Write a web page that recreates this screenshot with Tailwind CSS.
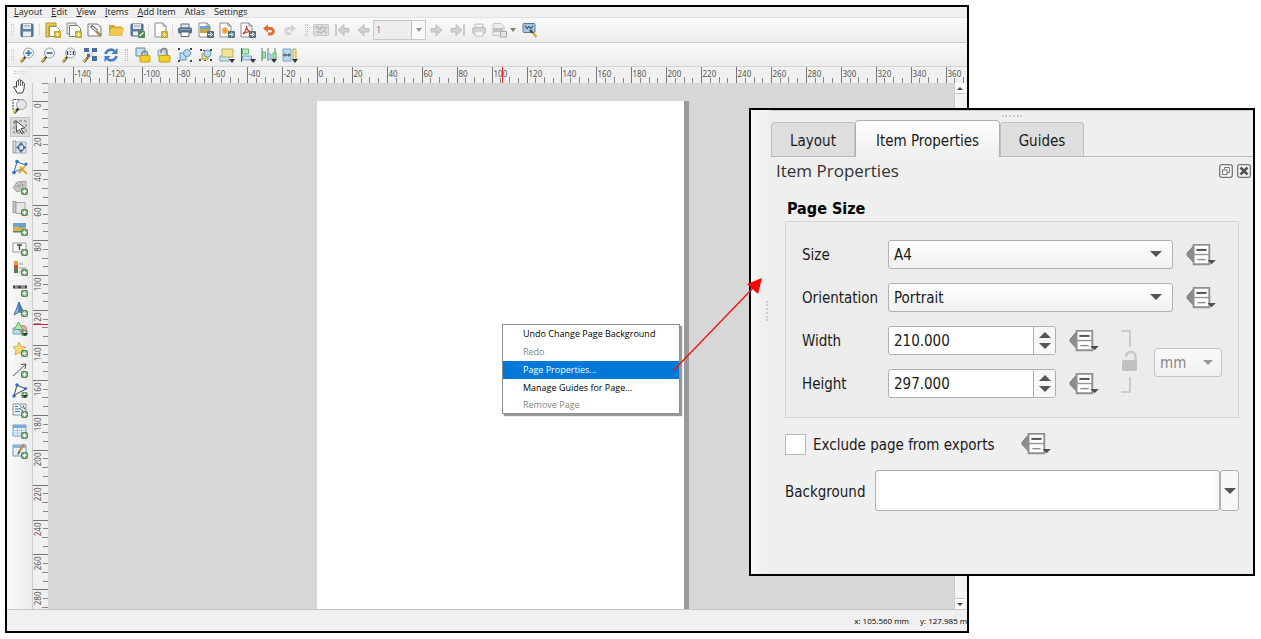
<!DOCTYPE html>
<html lang="en">
<head>
<meta charset="utf-8">
<title>Layout – Page Properties</title>
<script src="https://cdn.jsdelivr.net/npm/@tailwindcss/browser@4"></script>
</head>
<body class="relative h-screen min-h-[590px] overflow-hidden bg-white font-['Open_Sans','Noto_Sans',sans-serif] text-black">

<svg class="hidden" aria-hidden="true">
  <defs>
    <symbol id="plus" viewBox="0 0 7 7"><rect x=".5" y=".5" width="6" height="6" rx="1" fill="#6fa56d" stroke="#56895a"/><path d="M3.5 1.5v4M1.5 3.5h4" stroke="#fff" stroke-width="1.4"/></symbol>
    <symbol id="star" viewBox="0 0 7 7"><rect width="7" height="7" rx="1" fill="#c9a526"/><path d="M3.5 1v5M1 3.5h5M1.8 1.8l3.4 3.4M5.2 1.8L1.800 5.200" stroke="#fff3b0" stroke-width=".8"/></symbol>
    <symbol id="exp" viewBox="0 0 7 7"><rect width="7" height="7" rx="1" fill="#56707f"/><path d="M1 3.500h3M3 1.500l2.500 2L3 5.500" stroke="#fff" fill="none"/></symbol>
    <symbol id="sheet" viewBox="0 0 16 16"><path d="M2 1h8l3 3v11H2z" fill="#fdfdfd" stroke="#8d8d8d"/><path d="M10 1v3h3" fill="none" stroke="#8d8d8d"/></symbol>
    <symbol id="lens" viewBox="0 0 16 16"><path d="M2 15l5-6" stroke="#3d3d3d" stroke-width="2.2"/><path d="M1.500 14.500l3-3.500" stroke="#d9b83e" stroke-width="2"/><circle cx="9.500" cy="6" r="5" fill="#eef3f7" stroke="#9aa2a8"/></symbol>
    <symbol id="dd" viewBox="0 0 6 4"><path d="M0 0h6L3 4z" fill="#333"/></symbol>
    <symbol id="arrow" viewBox="0 0 16 16"><path d="M14 6.500v3.500H9v3.500L3 8l6-5.500v4z" fill="#ced0d1" stroke="#bcbebf"/></symbol>
    <symbol id="override" viewBox="0 0 32 26"><path d="M9 2v20L1 13.500V11z" fill="#8b8d8b" stroke="#6d6f6d"/><path d="M8 2h17v21H8z" fill="#fff" stroke="#8f918d" stroke-width="2"/><path d="M8 12.500h17" stroke="#92948f" stroke-width="1.500"/><path d="M11 7.500h11" stroke="#555" stroke-width="2.200"/><path d="M12 18h9" stroke="#8b8b8b" stroke-width="1.500"/><path d="M23 18.500h9L27.500 23z" fill="#4e4e4e"/></symbol>
  </defs>
</svg>

<main class="absolute inset-y-0 left-0 right-[292px] flex flex-col pt-[5px] pb-[6px] pl-[5px]">
<section class="flex min-h-0 flex-1 flex-col overflow-hidden border-2 border-black bg-[#f0f0f0]" aria-label="Layout window">

  <nav class="flex h-[11px] shrink-0 items-start gap-[9px] border-b border-[#e2e2e2] pl-[7px] text-[9px] leading-[9px] text-[#222]">
    <button><u>L</u>ayout</button><button><u>E</u>dit</button><button><u>V</u>iew</button><button><u>I</u>tems</button><button><u>A</u>dd Item</button><button>Atlas</button><button>Settings</button>
  </nav>

  <div class="flex h-[25px] shrink-0 items-center border-b border-[#c9c9c9] bg-linear-to-b from-[#fafafa] to-[#ededed] pl-1" role="toolbar" aria-label="Layout">
    <span class="mr-[2px] h-3 w-[3px] border-x border-dotted border-[#ccc]"></span>
    <button class="grid w-[21px] place-items-center" aria-label="Save"><svg class="size-4" viewBox="0 0 16 16"><rect x="2" y="2" width="12" height="12.500" rx="1" fill="#5d7d99" stroke="#48677f"/><rect x="4" y="2" width="8" height="5" fill="#dfe6ec"/><path d="M5 4h6" stroke="#8ba0b2"/><rect x="4" y="9.500" width="8" height="5" fill="#e9edf0"/></svg></button>
    <span class="mx-[2px] h-3 w-px bg-[#ddd]"></span>
    <button class="grid w-[21px] place-items-center" aria-label="New layout"><svg class="size-4" viewBox="0 0 16 16"><path d="M1 1h10v3H4v11H1z" fill="#e9c94c" stroke="#b9962b"/><path d="M4.500 4.500h7l3 3v7h-10z" fill="#fff" stroke="#8d8d8d"/><use href="#star" x="9" y="9" width="7" height="7"/></svg></button>
    <button class="grid w-[21px] place-items-center" aria-label="Duplicate layout"><svg class="size-4" viewBox="0 0 16 16"><path d="M1 1h9v11H1z" fill="#e9e9e9" stroke="#8d8d8d"/><path d="M3.500 3.500h8l3 3v8h-11z" fill="#fff" stroke="#777"/><use href="#star" x="9" y="9" width="7" height="7"/></svg></button>
    <button class="grid w-[21px] place-items-center" aria-label="Layout manager"><svg class="size-4" viewBox="0 0 16 16"><path d="M1 2h9l4 3v9H1z" fill="#fcfcfc" stroke="#777"/><path d="M4 4l6 5" stroke="#666" stroke-width="3"/><path d="M5 5l5 4" stroke="#f8f8f8" stroke-width="1.200"/><path d="M9 9l5 5" stroke="#9d8f64" stroke-width="2.500"/></svg></button>
    <button class="grid w-[21px] place-items-center" aria-label="Add items from template"><svg class="size-4" viewBox="0 0 16 16"><path d="M1 3h5l1 1.500h7V13H1z" fill="#d5a52a"/><path d="M3 6h12.500L14 13.500H1z" fill="#f3c94c" stroke="#dcae33" stroke-width=".6"/></svg></button>
    <button class="grid w-[21px] place-items-center" aria-label="Save as template"><svg class="size-4" viewBox="0 0 16 16"><rect x="2" y="2" width="12" height="12" rx="1" fill="#5d7d99" stroke="#48677f"/><rect x="4" y="2" width="8" height="5" fill="#dfe6ec"/><path d="M5 4h6" stroke="#8ba0b2"/><rect x="4" y="9.500" width="6" height="4" fill="#e9edf0"/><rect x="9" y="9" width="7" height="7" rx="1" fill="#4f8a54"/><path d="M10.500 14l4-3.500" stroke="#fff" stroke-width="1.400"/></svg></button>
    <span class="mx-px h-3 w-px bg-[#ddd]"></span>
    <button class="grid w-[21px] place-items-center" aria-label="Add pages"><svg class="size-4" viewBox="0 0 16 16"><use href="#sheet"/><use href="#star" x="8" y="9" width="7" height="7"/></svg></button>
    <span class="mx-px h-3 w-px bg-[#ddd]"></span>
    <button class="grid w-[21px] place-items-center" aria-label="Print"><svg class="size-4" viewBox="0 0 16 16"><path d="M4 2h8v4H4z" fill="#e4e7ea" stroke="#62717e"/><rect x="1" y="5.500" width="14" height="6" rx="1.500" fill="#557390"/><path d="M4 10h8v4.500H4z" fill="#fff" stroke="#667"/><path d="M3 7.500h10" stroke="#8ea7be"/></svg></button>
    <button class="grid w-[21px] place-items-center" aria-label="Export as image"><svg class="size-4" viewBox="0 0 16 16"><use href="#sheet" x="-1"/><path d="M2 4h10v6H2z" fill="#69a3d2"/><path d="M2 8q5-3 10 0v3H2z" fill="#c9a83b"/><use href="#exp" x="9" y="9" width="7" height="7"/></svg></button>
    <button class="grid w-[21px] place-items-center" aria-label="Export as SVG"><svg class="size-4" viewBox="0 0 16 16"><use href="#sheet" x="-1"/><path d="M6 5v7M2.500 8.500h7M3.500 6l5 5M8.500 6l-5 5" stroke="#f09a2e" stroke-width="1.400"/><use href="#exp" x="9" y="9" width="7" height="7"/></svg></button>
    <button class="grid w-[21px] place-items-center" aria-label="Export as PDF"><svg class="size-4" viewBox="0 0 16 16"><use href="#sheet" x="-1"/><path d="M3 12q4-4 3.500-8 0 5 5 6-4-1-8.500 2z" fill="none" stroke="#d8332b" stroke-width="1.200"/><use href="#exp" x="9" y="9" width="7" height="7"/></svg></button>
    <button class="grid w-[21px] place-items-center" aria-label="Undo"><svg class="size-4" viewBox="0 0 16 16"><path d="M6 6.500h3.500a2.800 2.800 0 010 5.600H7" fill="none" stroke="#dd6f37" stroke-width="3"/><path d="M7 2.500v8L2 6.500z" fill="#dd6f37"/></svg></button>
    <button class="grid w-[21px] place-items-center" aria-label="Redo"><svg class="size-4" viewBox="0 0 16 16"><path d="M10 6.500H6.500a2.600 2.600 0 000 5.200H9" fill="none" stroke="#d3d5d3" stroke-width="3"/><path d="M9 2.500v8l5-4z" fill="#d3d5d3"/></svg></button>
    <span class="mr-[2px] ml-[5px] h-3 w-[3px] border-x border-dotted border-[#bbb]"></span>
    <button class="grid w-[21px] place-items-center" aria-label="Preview atlas"><svg class="size-4" viewBox="0 0 16 16"><rect x=".5" y="2.500" width="15" height="11" rx="1" fill="#dcdedf" stroke="#c4c6c8"/><path d="M2 5h3v2h3V5h2l2 2 2-2M3 10h3l2 1 3-2 3 2" fill="none" stroke="#b4b7b9" stroke-width="1.300"/></svg></button>
    <button class="grid w-[21px] place-items-center" aria-label="First feature"><svg class="size-4" viewBox="0 0 16 16"><path d="M2 2v12" stroke="#bcbebf" stroke-width="1.500"/><use href="#arrow" x="1"/></svg></button>
    <button class="grid w-[21px] place-items-center" aria-label="Previous feature"><svg class="size-4" viewBox="0 0 16 16"><use href="#arrow"/></svg></button>
    <div class="flex h-5 w-[53px] border border-[#c9c9c9]"><input class="w-[38px] border-r border-[#bbb] bg-[#ededed] pl-[2px] text-[9px] text-[#777]" value="1" aria-label="Atlas feature"><button class="grid flex-1 place-items-center bg-[#fafafa]" aria-label="Choose feature"><svg class="h-1 w-[6px] opacity-50"><use href="#dd"/></svg></button></div>
    <button class="grid w-[21px] place-items-center" aria-label="Next feature"><svg class="size-4" viewBox="0 0 16 16"><g transform="matrix(-1 0 0 1 16 0)"><use href="#arrow"/></g></svg></button>
    <button class="grid w-[21px] place-items-center" aria-label="Last feature"><svg class="size-4" viewBox="0 0 16 16"><g transform="matrix(-1 0 0 1 15 0)"><use href="#arrow"/></g><path d="M14 2v12" stroke="#bcbebf" stroke-width="1.500"/></svg></button>
    <button class="grid w-[21px] place-items-center" aria-label="Print atlas"><svg class="size-4" viewBox="0 0 16 16"><path d="M4 2h8v4H4zM4 10h8v4H4z" fill="#f0f0f0" stroke="#b9bbbd"/><rect x="1.500" y="5.500" width="13" height="6" rx="1.500" fill="#d0d2d3" stroke="#bdbfc0"/><path d="M4.500 10h7v3.500h-7z" fill="#f5f5f5"/></svg></button>
    <button class="grid w-[21px] place-items-center" aria-label="Export atlas"><svg class="size-4" viewBox="0 0 16 16"><path d="M1 1.500h8l3 3v9H1z" fill="#ececec" stroke="#c4c6c7"/><path d="M1 6h10v4H1z" fill="#bfc2c3"/><rect x="8.500" y="9.500" width="6" height="5.500" fill="#e5e5e5" stroke="#aaa"/></svg></button>
    <svg class="h-1 w-[6px] opacity-60"><use href="#dd"/></svg>
    <button class="ml-[3px] grid w-[21px] place-items-center" aria-label="Atlas settings"><svg class="size-4" viewBox="0 0 16 16"><rect x="1" y="1.500" width="12" height="9" rx="1" fill="#a9c8e4" stroke="#55779a"/><path d="M3 3.500l2 3 2-2 2 2 2-3" stroke="#3c5b7d" fill="none" stroke-width="1.200"/><path d="M8 8l3 3" stroke="#444" stroke-width="2.200"/><path d="M11 11l3.500 4" stroke="#d4a73a" stroke-width="2.400"/></svg></button>
  </div>

  <div class="flex h-6 shrink-0 items-center border-b border-[#d2d2d2] bg-linear-to-b from-[#f9f9f9] to-[#ededed] pl-1" role="toolbar" aria-label="Navigation and actions">
    <span class="mr-[2px] h-3 w-[3px] border-x border-dotted border-[#ccc]"></span>
    <button class="grid w-[21px] place-items-center" aria-label="Zoom in"><svg class="size-4" viewBox="0 0 16 16"><use href="#lens"/><path d="M9.500 3v6M6.500 6h6" stroke="#5b82ad" stroke-width="2"/></svg></button>
    <button class="grid w-[21px] place-items-center" aria-label="Zoom out"><svg class="size-4" viewBox="0 0 16 16"><use href="#lens"/><path d="M6.500 6h6" stroke="#5b82ad" stroke-width="2"/></svg></button>
    <button class="grid w-[21px] place-items-center" aria-label="Zoom to 100%"><svg class="size-4" viewBox="0 0 16 16"><use href="#lens"/><path d="M6.500 4v4M12.500 4v4M9.500 4.500v1M9.500 7v1" stroke="#444" stroke-width="1.400"/></svg></button>
    <button class="grid w-[21px] place-items-center" aria-label="Zoom full"><svg class="size-4" viewBox="0 0 16 16"><path d="M2 15l5-6" stroke="#3d3d3d" stroke-width="2.200"/><path d="M1.500 14.500l3-3.500" stroke="#d9b83e" stroke-width="2"/><path d="M5 4.500h7v6H5z" fill="#d9dde0"/><path d="M2 1h5v4H2zM10 1h5v4h-5zM10 9h5v5h-5zM5 7h3v3H5z" fill="#466f9f"/></svg></button>
    <button class="grid w-[21px] place-items-center" aria-label="Refresh"><svg class="size-4" viewBox="0 0 16 16"><path d="M2.500 7a5.500 5.500 0 019-3M13.500 9a5.500 5.500 0 01-9 3" fill="none" stroke="#4380bd" stroke-width="2.600"/><path d="M14.500 1v6h-6zM1.500 15V9h6z" fill="#4380bd"/></svg></button>
    <span class="mr-1 ml-1 h-3 w-[3px] border-x border-dotted border-[#bbb]"></span>
    <button class="grid w-[21px] place-items-center" aria-label="Lock items"><svg class="size-4" viewBox="0 0 16 16"><path d="M1 1h9v8H1z" fill="#c5e1f3" stroke="#648aa8"/><path d="M7 9V7a2.700 2.700 0 015.500 0v2" fill="none" stroke="#808080" stroke-width="1.500"/><rect x="5" y="8.500" width="10" height="6.500" rx="1" fill="#f4cf28" stroke="#c29d15"/></svg></button>
    <button class="grid w-[21px] place-items-center" aria-label="Unlock items"><svg class="size-4" viewBox="0 0 16 16"><path d="M2 3h8v6H2z" fill="#c5e1f3" stroke="#88a7bd"/><path d="M5 6V4.500a3 3 0 016 0V9" fill="none" stroke="#808080" stroke-width="1.500"/><rect x="3" y="8.500" width="11" height="6.500" rx="1" fill="#f4cf28" stroke="#c29d15"/></svg></button>
    <button class="grid w-[21px] place-items-center" aria-label="Group"><svg class="size-4" viewBox="0 0 16 16"><rect x="3" y="6" width="6" height="7" fill="#b8dcf4" stroke="#6594b6"/><circle cx="10" cy="6" r="3.500" fill="#b8dcf4" stroke="#6594b6"/><path d="M1 1h2v2H1zM13 1h2v2h-2zM1 13h2v2H1zM13 13h2v2h-2z" fill="#444"/></svg></button>
    <button class="grid w-[21px] place-items-center" aria-label="Ungroup"><svg class="size-4" viewBox="0 0 16 16"><rect x="4" y="7" width="6" height="5" fill="#eadf79" stroke="#9e9745"/><circle cx="9.500" cy="6.500" r="3.500" fill="#b8dcf4" stroke="#6594b6"/><path d="M2 2h2v2H2zM12 2h2v2h-2zM1 12h2v2H1zM12 12h2v2h-2zM5 3h2v1H5zM6 13h2v1H6z" fill="#444"/></svg></button>
    <button class="grid w-[21px] place-items-center" aria-label="Raise"><svg class="size-4" viewBox="0 0 16 16"><path d="M1 9h9v5H1z" fill="#c9e4f5" stroke="#7aa4be"/><path d="M3 2h11v8H3z" fill="#efe69b" stroke="#b9b062"/><use href="#dd" x="10" y="12" width="6" height="4"/></svg></button>
    <button class="grid w-[21px] place-items-center" aria-label="Align"><svg class="size-4" viewBox="0 0 16 16"><path d="M1.500 1v14" stroke="#555"/><path d="M2.500 2h6v5h-6z" fill="#b6edc0" stroke="#69b277"/><path d="M2.500 9h9v4h-9z" fill="#c5e1f3" stroke="#7aa4be"/><use href="#dd" x="10" y="12" width="6" height="4"/></svg></button>
    <button class="grid w-[21px] place-items-center" aria-label="Distribute"><svg class="size-4" viewBox="0 0 16 16"><path d="M1 1v13M7 1v13M14 1v13" stroke="#5c7b69"/><path d="M1.500 5h3v6h-3zM12 6h3v6h-3z" fill="#a6e7b2" stroke="#63b176"/><path d="M7 7h3v5H7z" fill="#c5e1f3" stroke="#7aa4be"/><use href="#dd" x="10" y="12" width="6" height="4"/></svg></button>
    <button class="grid w-[21px] place-items-center" aria-label="Resize"><svg class="size-4" viewBox="0 0 16 16"><path d="M1 2h8v12H1z" fill="#b9dcf2" stroke="#7aa4be"/><path d="M1 8h3M9 8H6M3 6.500L4.500 8 3 9.500M7 6.500L5.500 8 7 9.500" stroke="#333" fill="none"/><path d="M11 2h3v11h-3z" fill="#efe69b" stroke="#b3a95a"/><use href="#dd" x="10" y="12" width="6" height="4"/></svg></button>
  </div>

  <div class="flex min-h-0 flex-1 border-b border-[#c4c4c4]">
    <div class="flex w-[25px] shrink-0 flex-col items-center bg-linear-to-r from-[#fbfbfb] to-[#ececec] pt-1" role="toolbar" aria-label="Toolbox">
      <span class="h-[3px] w-3 border-y border-dotted border-[#ccc]"></span>
      <div class="mt-[2px] flex h-[385px] flex-col justify-between">
        <button class="grid size-5 place-items-center" aria-label="Pan"><svg class="size-4" viewBox="0 0 16 16"><path d="M5 15q-1-3-3.500-6 1-1.500 3 .5V3.500q1-1.300 2 0V2q1-1.300 2 0v1q1-1.200 2 .2V5q1.500-1 2 .5 0 6-2 9.500z" fill="#fff" stroke="#444"/><path d="M6.500 3.500V8M8.500 3v5M10.500 4v4" stroke="#444" stroke-width=".8"/></svg></button>
        <button class="grid size-5 place-items-center" aria-label="Zoom"><svg class="size-4" viewBox="0 0 16 16"><path d="M1 12V1.500h11" fill="none" stroke="#444" stroke-dasharray="2 1"/><path d="M2 15l5-5" stroke="#333" stroke-width="2.500"/><path d="M1.500 15l2.500-3" stroke="#d9b83e" stroke-width="2"/><circle cx="9.500" cy="6.500" r="5" fill="#e3e5e3" stroke="#9fa19f"/></svg></button>
        <button class="grid size-5 place-items-center border border-[#c4c4c4] bg-[#dadada]" aria-label="Select" aria-pressed="true"><svg class="size-4" viewBox="0 0 16 16"><path d="M2 2h12v12H2z" fill="none" stroke="#777" stroke-dasharray="3 2"/><path d="M4 2l9 7-4 .5 2.500 4-2 1-2-4L4.500 13z" fill="#fff" stroke="#444"/></svg></button>
        <button class="grid size-5 place-items-center" aria-label="Move content"><svg class="size-4" viewBox="0 0 16 16"><path d="M1 2h3v12H1z" fill="#ddd" stroke="#999"/><path d="M4 3h10v11H4z" fill="#dfe6ec" stroke="#a3afba"/><path d="M9 3l3 3.500H6zM9 14l3-3.500H6zM4 8.500L7.500 6v5zM14.500 8.500L11 6v5z" fill="#456f9f"/></svg></button>
        <button class="grid size-5 place-items-center" aria-label="Edit nodes"><svg class="size-4" viewBox="0 0 16 16"><path d="M2 13L5 3l9 3-4 4z" fill="#f1f1f1" stroke="#3c6da5"/><circle cx="5" cy="2.500" r="1.800" fill="#2f73cf"/><circle cx="2" cy="13.500" r="1.800" fill="#2f73cf"/><circle cx="14" cy="5" r="1.600" fill="#2f73cf"/><path d="M7 14l6-7M8 8l7 7" stroke="#e0aa2e" stroke-width="2"/></svg></button>
        <button class="grid size-5 place-items-center" aria-label="Add map"><svg class="size-4" viewBox="0 0 16 16"><path d="M1 9l4-6 9-1v8l-9 3z" fill="#c8cac8" stroke="#a2a4a2"/><path d="M3 8l10-3M5 4l3 6M9 3l2 6" stroke="#999b99" stroke-width=".8"/><use href="#plus" x="9" y="9" width="7" height="7"/></svg></button>
        <button class="grid size-5 place-items-center" aria-label="Add 3D map"><svg class="size-4" viewBox="0 0 16 16"><path d="M1 1.500h3v11H1z" fill="#c7c7c7" stroke="#999"/><path d="M4 2.500h9v11H4z" fill="#e7e7e7" stroke="#a5a5a5"/><use href="#plus" x="9" y="9" width="7" height="7"/></svg></button>
        <button class="grid size-5 place-items-center" aria-label="Add picture"><svg class="size-4" viewBox="0 0 16 16"><path d="M1 3h13v9H1z" fill="#66a2d6"/><path d="M1 8q4-4 7 0l6-1v5H1z" fill="#d4b64c"/><path d="M1 11h13v1.500H1z" fill="#61896c"/><use href="#plus" x="9" y="9" width="7" height="7"/></svg></button>
        <button class="grid size-5 place-items-center" aria-label="Add label"><svg class="size-4" viewBox="0 0 16 16"><path d="M1 3h13v9H1z" fill="#fafafa" stroke="#999"/><path d="M5 5h5M7.500 5v5" stroke="#444" stroke-width="1.300"/><use href="#plus" x="9" y="9" width="7" height="7"/></svg></button>
        <button class="grid size-5 place-items-center" aria-label="Add legend"><svg class="size-4" viewBox="0 0 16 16"><path d="M2 1h4v4H2z" fill="#e8a02e"/><path d="M2 5h4v4H2z" fill="#cc4b39"/><path d="M2 9h4v4H2z" fill="#3d8d49"/><path d="M7 4h4M7 8h7M7 12h3" stroke="#999"/><use href="#plus" x="9" y="9" width="7" height="7"/></svg></button>
        <button class="grid size-5 place-items-center" aria-label="Add scale bar"><svg class="size-4" viewBox="0 0 16 16"><path d="M1 4.500h14v3H1z" fill="#444"/><path d="M3 6h3M9 6h4" stroke="#ddd"/><use href="#plus" x="9" y="9" width="7" height="7"/></svg></button>
        <button class="grid size-5 place-items-center" aria-label="Add north arrow"><svg class="size-4" viewBox="0 0 16 16"><path d="M7 1L2 14l5-3z" fill="#8bb3d8" stroke="#4c7ba8"/><path d="M7 1l5 11-5-1z" fill="#4b7cae" stroke="#4c7ba8"/><use href="#plus" x="9" y="9" width="7" height="7"/></svg></button>
        <button class="grid size-5 place-items-center" aria-label="Add shape"><svg class="size-4" viewBox="0 0 16 16"><path d="M1 7h9v6H1z" fill="#b9dcf2" stroke="#7aa4be"/><circle cx="11" cy="8" r="3.500" fill="#eeaaa5" stroke="#c67a74"/><path d="M6.500 1L11 8.500H2z" fill="#a6e7a6" stroke="#65a865"/><use href="#plus" x="9" y="9" width="7" height="6"/><path d="M10 12h6l-3 3z" fill="#333"/></svg></button>
        <button class="grid size-5 place-items-center" aria-label="Add marker"><svg class="size-4" viewBox="0 0 16 16"><path d="M7 1l2 4.500 5 .500-4 3.300 1 4.700-4-2.500L3 14l1-4.700L1 6l4.500-.500z" fill="#f8da83" stroke="#d8ad51"/><use href="#plus" x="9" y="9" width="7" height="7"/></svg></button>
        <button class="grid size-5 place-items-center" aria-label="Add arrow"><svg class="size-4" viewBox="0 0 16 16"><path d="M1 14L13 3M9 2.500l5-.500-1 5" fill="none" stroke="#555"/><use href="#plus" x="9" y="9" width="7" height="7"/></svg></button>
        <button class="grid size-5 place-items-center" aria-label="Add node item"><svg class="size-4" viewBox="0 0 16 16"><path d="M2 14L5 3l9 4-8 4z" fill="#f5f5f5" stroke="#444"/><circle cx="5" cy="3" r="1.800" fill="#2f73cf"/><circle cx="2" cy="14" r="1.800" fill="#2f73cf"/><circle cx="13.500" cy="6.500" r="1.600" fill="#2f73cf"/><use href="#plus" x="9" y="10" width="7" height="6"/><path d="M10 13h6l-3 3z" fill="#333"/></svg></button>
        <button class="grid size-5 place-items-center" aria-label="Add HTML"><svg class="size-4" viewBox="0 0 16 16"><path d="M1 2h13v11H1z" fill="#eef3f7" stroke="#8293a3"/><path d="M3 4.500h3M3 7h4M3 9.500h5" stroke="#4d86bf"/><path d="M8 3.500l3 3M11 3.500l2 4M7 6l4 3" stroke="#555"/><use href="#plus" x="9" y="9" width="7" height="7"/></svg></button>
        <button class="grid size-5 place-items-center" aria-label="Add attribute table"><svg class="size-4" viewBox="0 0 16 16"><path d="M1 2h13v11H1z" fill="#edf5fb" stroke="#6f9cc4"/><path d="M1 2h13v3H1z" fill="#79a9d6"/><path d="M1 7.500h13M1 10h13M5.500 5v8M9.500 5v8" stroke="#a9c6df"/><use href="#plus" x="9" y="9" width="7" height="7"/></svg></button>
        <button class="grid size-5 place-items-center" aria-label="Add fixed table"><svg class="size-4" viewBox="0 0 16 16"><path d="M1 2h13v11H1z" fill="#e5eff7" stroke="#6f9cc4"/><path d="M1 2h13v3H1z" fill="#8cb4da"/><path d="M12 1L7 9" stroke="#c9883a" stroke-width="2.200"/><path d="M7 8l-2 4 3-2z" fill="#333"/><use href="#plus" x="9" y="9" width="7" height="7"/></svg></button>
      </div>
    </div>

    <div class="flex min-w-0 flex-1 flex-col">
      <div class="h-4 shrink-0 overflow-hidden"><svg id="hruler" class="h-4 w-full font-['Noto_Sans',sans-serif]" role="img" aria-label="Horizontal ruler"></svg></div>
      <div class="flex min-h-0 flex-1">
        <div class="w-4 shrink-0 overflow-hidden"><svg id="vruler" class="h-full w-4 font-['Noto_Sans',sans-serif]" role="img" aria-label="Vertical ruler"></svg></div>
        <div class="min-w-0 flex-1 bg-[#d7d7d7] pt-[18px] pl-[269px]">
          <div class="h-full w-[372px] border-r-[5px] border-[#999] bg-white"></div>
        </div>
        <div class="mr-[2px] flex w-[11px] shrink-0 flex-col justify-between border-l border-[#ccc] bg-[#f3f3f3]">
          <button class="grid h-[11px] place-items-center border-b border-[#ccc] bg-white" aria-label="Scroll up"><svg class="h-[3px] w-[6px]" viewBox="0 0 6 3"><path d="M0 3h6L3 0z" fill="#444"/></svg></button>
          <button class="grid h-[11px] place-items-center border-t border-[#ccc] bg-white" aria-label="Scroll down"><svg class="h-[3px] w-[6px]" viewBox="0 0 6 3"><path d="M0 0h6L3 3z" fill="#444"/></svg></button>
        </div>
      </div>
    </div>
  </div>

  <footer class="flex h-[21px] shrink-0 items-center justify-end gap-[11px] overflow-hidden text-[8px] whitespace-nowrap">
    <span>x: 105.560 mm</span><span class="w-[47px] overflow-hidden">y: 127.985 mm</span>
  </footer>
</section>
</main>

<ul class="absolute top-[324px] left-[502px] w-[178px] border border-[#8f8f8f] bg-white text-[9px] leading-[18px] shadow-[2px_2px_1px_#999]" role="menu">
  <li><button class="block w-full pl-5 text-left" role="menuitem">Undo Change Page Background</button></li>
  <li><button class="block w-full pl-5 text-left text-[#858585]" role="menuitem">Redo</button></li>
  <li><button class="block w-full bg-[#0078d7] pl-5 text-left text-white" role="menuitem">Page Properties...</button></li>
  <li><button class="block w-full pl-5 text-left" role="menuitem">Manage Guides for Page...</button></li>
  <li><button class="block w-full pl-5 text-left leading-4 text-[#858585]" role="menuitem">Remove Page</button></li>
</ul>

<aside class="absolute top-[108px] left-[749px] flex h-[468px] w-[506px] border-2 border-black bg-[#efefef] font-['DejaVu_Sans_Condensed','DejaVu_Sans',sans-serif] text-[15px] text-[#1a1a1a]" aria-label="Item Properties">
  <div class="flex w-5 shrink-0 items-center bg-linear-to-r from-[#fafafa] to-[#efefef] to-60% pb-[62px] pl-[15px]"><span class="h-5 w-[3px] border-l-2 border-dotted border-[#ccc]"></span></div>
  <div class="flex min-w-0 flex-1 flex-col">
    <div class="flex h-[11px] justify-center border-t border-[#ccc] pt-1"><span class="h-1 w-5 border-t-2 border-dotted border-[#ccc]"></span></div>
    <div class="flex h-9 items-end border-b border-[#b9b9b9]" role="tablist">
      <button class="h-[34px] w-[84px] rounded-t-sm border border-b-0 border-[#c0c0c0] bg-[#dedede] pt-1" role="tab">Layout</button>
      <button class="-mb-px h-[37px] w-[145px] rounded-t-sm border border-b-0 border-[#b0b0b0] bg-linear-to-b from-white to-[#efefef] pt-1" role="tab" aria-selected="true">Item Properties</button>
      <button class="h-[34px] w-[84px] rounded-t-sm border border-b-0 border-[#c0c0c0] bg-[#dedede] pt-1" role="tab">Guides</button>
    </div>
    <header class="flex h-7 items-center justify-between pr-[2px] pl-[5px]">
      <h1 class="font-['Open_Sans','Noto_Sans',sans-serif] text-[17px] text-[#333]">Item Properties</h1>
      <span class="flex gap-1">
        <button aria-label="Float panel"><svg class="block size-[14px]" viewBox="0 0 14 14"><rect x=".7" y=".7" width="12.600" height="12.600" rx="2" fill="#f5f5f5" stroke="#777" stroke-width="1.300"/><path d="M5.500 5.500V3.500h5v5h-2" fill="none" stroke="#777"/><rect x="3.500" y="6" width="4.500" height="4.500" fill="#fff" stroke="#777"/></svg></button>
        <button aria-label="Close panel"><svg class="block size-[14px]" viewBox="0 0 14 14"><rect x=".7" y=".7" width="12.600" height="12.600" rx="2" fill="#f5f5f5" stroke="#777" stroke-width="1.300"/><path d="M3.500 3.500l7 7M10.500 3.500l-7 7" stroke="#555" stroke-width="2.600"/></svg></button>
      </span>
    </header>

    <form class="flex flex-col pt-3 pr-[14px] pl-[14px]">
      <h2 class="pl-[2px] text-[16px] leading-6 font-bold text-black">Page Size</h2>
      <fieldset class="flex h-[197px] flex-col gap-[14px] border border-[#d4d4d4] bg-[#ececec] pt-[18px] pr-4 pl-4">
        <div class="flex items-center">
          <label for="size" class="w-[86px] pt-[2px]">Size</label>
          <div class="relative flex-1"><select id="size" class="block h-[29px] w-full appearance-none rounded-[3px] border border-[#b0b0b0] bg-linear-to-b from-white to-[#f0f0f0] pt-[2px] pl-[5px]"><option>A4</option></select><svg class="pointer-events-none absolute top-[11px] right-[11px] h-[6px] w-3" viewBox="0 0 12 6"><path d="M0 0h12L6 6z" fill="#555"/></svg></div>
          <button type="button" class="mr-[6px] ml-[13px]" aria-label="Size override"><svg class="block h-6 w-[30px]"><use href="#override"/></svg></button>
        </div>
        <div class="flex items-center">
          <label for="orient" class="w-[86px] pt-[2px]">Orientation</label>
          <div class="relative flex-1"><select id="orient" class="block h-[29px] w-full appearance-none rounded-[3px] border border-[#b0b0b0] bg-linear-to-b from-white to-[#f0f0f0] pt-[2px] pl-[5px]"><option>Portrait</option></select><svg class="pointer-events-none absolute top-[11px] right-[11px] h-[6px] w-3" viewBox="0 0 12 6"><path d="M0 0h12L6 6z" fill="#555"/></svg></div>
          <button type="button" class="mr-[6px] ml-[13px]" aria-label="Orientation override"><svg class="block h-6 w-[30px]"><use href="#override"/></svg></button>
        </div>
        <div class="flex items-center">
          <div class="flex flex-col gap-[14px]">
            <div class="flex items-center">
              <label for="w" class="w-[86px] pt-[2px]">Width</label>
              <div class="flex h-[29px] w-[168px] overflow-hidden rounded-[3px] border border-[#b0b0b0] bg-white"><input id="w" class="min-w-0 flex-1 pt-[2px] pl-[5px]" value="210.000"><div class="flex w-[22px] flex-col items-center justify-center gap-[5px] border-l border-[#b0b0b0] bg-[#f7f7f7]"><button type="button" aria-label="Increase width"><svg class="block h-[6px] w-3" viewBox="0 0 12 6"><path d="M0 6h12L6 0z" fill="#555"/></svg></button><button type="button" aria-label="Decrease width"><svg class="block h-[6px] w-3" viewBox="0 0 12 6"><path d="M0 0h12L6 6z" fill="#555"/></svg></button></div></div>
              <button type="button" class="ml-[13px]" aria-label="Width override"><svg class="block h-6 w-[30px]"><use href="#override"/></svg></button>
            </div>
            <div class="flex items-center">
              <label for="h" class="w-[86px] pt-[2px]">Height</label>
              <div class="flex h-[29px] w-[168px] overflow-hidden rounded-[3px] border border-[#b0b0b0] bg-white"><input id="h" class="min-w-0 flex-1 pt-[2px] pl-[5px]" value="297.000"><div class="flex w-[22px] flex-col items-center justify-center gap-[5px] border-l border-[#b0b0b0] bg-[#f7f7f7]"><button type="button" aria-label="Increase height"><svg class="block h-[6px] w-3" viewBox="0 0 12 6"><path d="M0 6h12L6 0z" fill="#555"/></svg></button><button type="button" aria-label="Decrease height"><svg class="block h-[6px] w-3" viewBox="0 0 12 6"><path d="M0 0h12L6 6z" fill="#555"/></svg></button></div></div>
              <button type="button" class="ml-[13px]" aria-label="Height override"><svg class="block h-6 w-[30px]"><use href="#override"/></svg></button>
            </div>
          </div>
          <button type="button" class="ml-[22px]" aria-label="Lock aspect ratio"><svg class="block h-[66px] w-[18px]" viewBox="0 0 18 66"><path d="M0 2h9v16M0 63h9V48" fill="none" stroke="#cacaca" stroke-width="2"/><path d="M5 28q0-5 5-5 4.500 0 4.500 5v4" fill="none" stroke="#cacaca" stroke-width="2.500"/><rect x="1" y="31" width="15" height="11" rx="2" fill="#c0c0c0"/></svg></button>
          <div class="relative ml-[15px] w-[68px]"><select class="block h-[29px] w-full appearance-none rounded-[3px] border border-[#c4c4c4] bg-linear-to-b from-[#fafafa] to-[#f0f0f0] pt-[2px] pl-[5px] text-[#888]" aria-label="Units"><option>mm</option></select><svg class="pointer-events-none absolute top-3 right-[9px] h-[5px] w-[10px]" viewBox="0 0 10 5"><path d="M0 0h10L5 5z" fill="#999"/></svg></div>
        </div>
      </fieldset>
      <div class="mt-[13px] flex h-[26px] items-center">
        <input id="ex" type="checkbox" class="size-[21px] appearance-none border border-[#b8b8b8] bg-white">
        <label for="ex" class="ml-[7px] w-[208px] pt-[2px]">Exclude page from exports</label>
        <button type="button" aria-label="Exclude override"><svg class="block h-6 w-[30px]"><use href="#override"/></svg></button>
      </div>
      <div class="mt-[13px] flex h-[41px] items-center">
        <label for="bg" class="w-[90px] pt-[3px]">Background</label>
        <button id="bg" type="button" class="h-full flex-1 rounded-[3px] border border-[#b0b0b0] bg-[#f8f8f8] px-1 pt-px pb-[3px]"><span class="block h-full bg-white"></span></button>
        <button type="button" class="grid h-full w-[19px] place-items-center rounded-[3px] border border-[#b0b0b0] bg-[#f7f7f7]" aria-label="Background options"><svg class="h-[6px] w-3" viewBox="0 0 12 6"><path d="M0 0h12L6 6z" fill="#555"/></svg></button>
      </div>
    </form>
  </div>
</aside>

<svg class="pointer-events-none absolute top-[270px] left-[660px] h-[110px] w-[110px]" viewBox="0 0 110 110" aria-hidden="true"><path d="M13 101L94 17" stroke="#f01414" stroke-width="1.400"/><path d="M102 8l-15 6 11 10z" fill="#f00"/></svg>

<script>
// Ruler ticks: a labelled line every 20 mm, a short one every 5 mm.
const NS = 'http://www.w3.org/2000/svg', MM = 1.746;
function add(svg, tag, attrs, text) {
  const e = document.createElementNS(NS, tag);
  for (const k in attrs) e.setAttribute(k, attrs[k]);
  if (text !== undefined) e.textContent = text;
  svg.appendChild(e);
}
function ruler(id, vertical, origin, from, to, cursor) {
  const svg = document.getElementById(id);
  for (let mm = from; mm <= to; mm += 5) {
    const p = Math.round(origin + mm * MM) + 0.5;
    const len = mm % 20 === 0 ? 16 : mm % 10 === 0 ? 6 : 5;
    const stroke = mm % 20 === 0 ? '#777' : '#888';
    add(svg, 'line', vertical ? {x1: 16 - len, x2: 16, y1: p, y2: p, stroke} : {y1: 16 - len, y2: 16, x1: p, x2: p, stroke});
    if (mm % 20 === 0) {
      add(svg, 'text', vertical
        ? {transform: `translate(9 ${p + 2}) rotate(-90)`, 'text-anchor': 'end', 'font-size': 8, fill: '#555'}
        : {x: p + 1, y: 10, 'font-size': 8, fill: '#555'}, mm);
    }
  }
  add(svg, 'line', vertical ? {x1: 0, x2: 16, y1: cursor, y2: cursor, stroke: '#e02020'} : {y1: 0, y2: 16, x1: cursor, x2: cursor, stroke: '#e02020'});
  if (vertical) add(svg, 'line', {x1: .5, x2: .5, y1: 0, y2: 2000, stroke: '#ccc'});
}
ruler('hruler', false, 285, -150, 370, 470.5);
ruler('vruler', true, 17.500, -10, 290, 241.500);
</script>
</body>
</html>
